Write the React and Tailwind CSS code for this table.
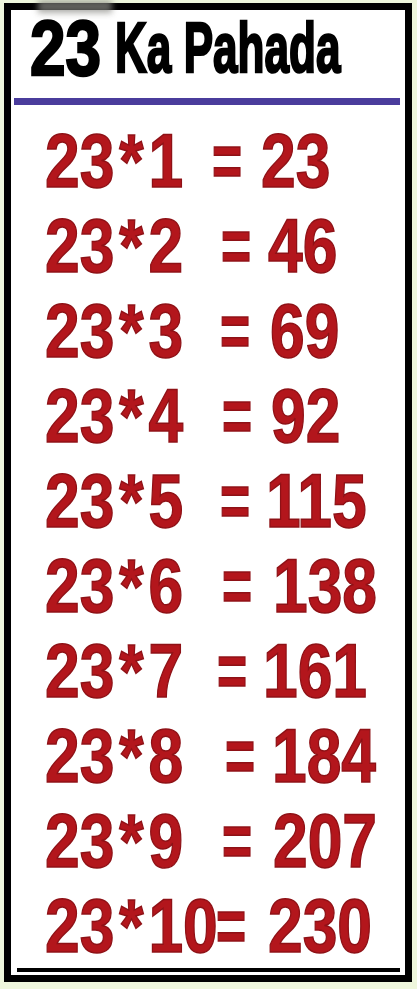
const rows = [
  { n: "1", res: "23", lw: "w-[167px]", ew: "w-[49px]" },
  { n: "2", res: "46", lw: "w-[176px]", ew: "w-[47px]" },
  { n: "3", res: "69", lw: "w-[175px]", ew: "w-[50px]" },
  { n: "4", res: "92", lw: "w-[177px]", ew: "w-[49px]" },
  { n: "5", res: "115", lw: "w-[175px]", ew: "w-[46px]" },
  { n: "6", res: "138", lw: "w-[177px]", ew: "w-[51px]" },
  { n: "7", res: "161", lw: "w-[172px]", ew: "w-[46px]" },
  { n: "8", res: "184", lw: "w-[180px]", ew: "w-[47px]" },
  { n: "9", res: "207", lw: "w-[177px]", ew: "w-[51px]" },
  { n: "10", res: "230", lw: "w-[171px]", ew: "w-[52px]" },
];

export default function App() {
  return (
    <div className="relative w-[417px] h-[989px] bg-[#eef6dc] pt-[3px] pl-[4px] font-['Liberation_Sans',Arial,sans-serif]">
      <div className="absolute left-[38px] top-0 w-[74px] h-[13px] bg-[#8a8a84] blur-[3px] opacity-70" />
      <div className="w-[408px] h-[979px] border-[7px] border-black bg-white flex flex-col">
        <div className="h-[88px] flex items-start pl-[19px]">
          <span className="text-[77px] leading-none font-bold text-black [-webkit-text-stroke:2.5px_#000] scale-x-[0.83] origin-left">23</span>
          <span className="mt-[3px] -ml-[1px] text-[70px] leading-none font-bold text-black [-webkit-text-stroke:2.5px_#000] scale-x-[0.63] origin-left whitespace-nowrap">
            Ka Pahada
          </span>
        </div>
        <div className="h-[7px] ml-[3px] mr-[5px] bg-[#4a3c9c]" />
        <div className="h-[13px]" />
        <div className="h-[850px] flex flex-col">
          {rows.map((r) => (
            <div key={r.n} className="h-[85px] flex items-start pl-[34px] text-[76px] leading-[85px] font-bold text-[#b3161c] [-webkit-text-stroke:1.5px_#8e1116] whitespace-nowrap">
              <span className={r.lw}>
                <span className="inline-block scale-x-[0.82] origin-left">
                  23<span className="mx-[6px]">*</span>{r.n}
                </span>
              </span>
              <span className={r.ew}>
                <span className="inline-block scale-x-[0.68] origin-left">=</span>
              </span>
              <span className="inline-block scale-x-[0.82] origin-left">{r.res}</span>
            </div>
          ))}
        </div>
        <div className="h-[4px] ml-[6px] mr-[5px] bg-black" />
      </div>
    </div>
  );
}
